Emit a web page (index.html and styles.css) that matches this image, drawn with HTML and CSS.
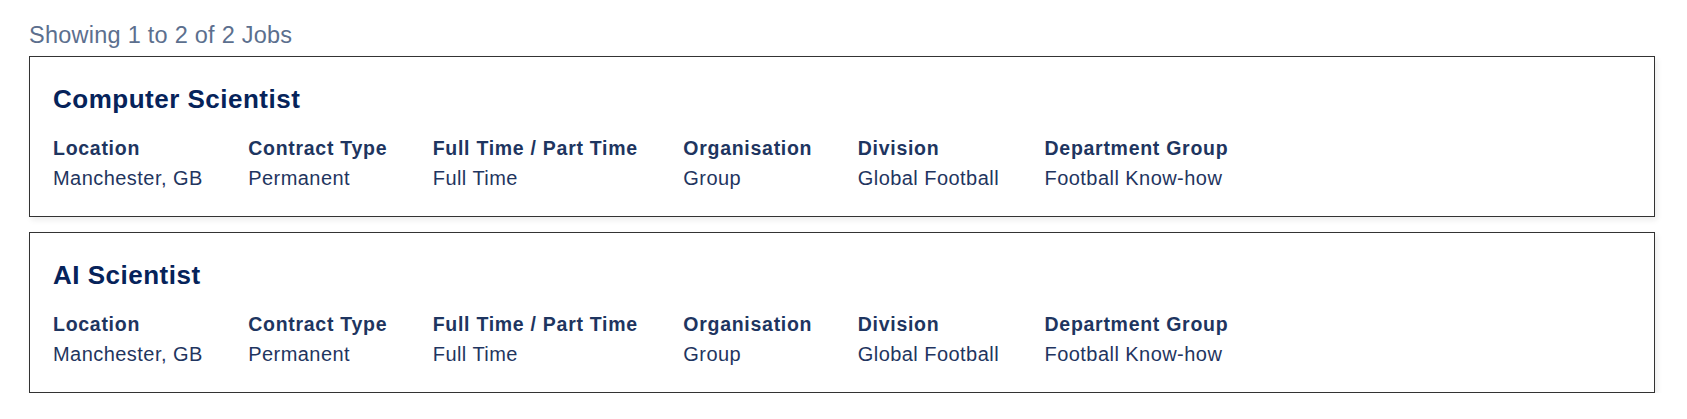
FILE: index.html
```html
<!DOCTYPE html>
<html lang="en">
<head>
<meta charset="utf-8">
<title>Jobs</title>
<link rel="stylesheet" href="styles.css">
</head>
<body>
<main class="results">
  <p class="results-count">Showing 1 to 2 of 2 Jobs</p>
  <ul class="job-list">
    <li class="job-card">
      <h2 class="job-title">Computer Scientist</h2>
      <dl class="job-meta">
        <div class="meta-item"><dt>Location</dt><dd>Manchester, GB</dd></div>
        <div class="meta-item"><dt>Contract Type</dt><dd>Permanent</dd></div>
        <div class="meta-item"><dt>Full Time / Part Time</dt><dd>Full Time</dd></div>
        <div class="meta-item"><dt>Organisation</dt><dd>Group</dd></div>
        <div class="meta-item"><dt>Division</dt><dd>Global Football</dd></div>
        <div class="meta-item"><dt>Department Group</dt><dd>Football Know-how</dd></div>
      </dl>
    </li>
    <li class="job-card">
      <h2 class="job-title">AI Scientist</h2>
      <dl class="job-meta">
        <div class="meta-item"><dt>Location</dt><dd>Manchester, GB</dd></div>
        <div class="meta-item"><dt>Contract Type</dt><dd>Permanent</dd></div>
        <div class="meta-item"><dt>Full Time / Part Time</dt><dd>Full Time</dd></div>
        <div class="meta-item"><dt>Organisation</dt><dd>Group</dd></div>
        <div class="meta-item"><dt>Division</dt><dd>Global Football</dd></div>
        <div class="meta-item"><dt>Department Group</dt><dd>Football Know-how</dd></div>
      </dl>
    </li>
  </ul>
</main>
</body>
</html>
```
FILE: styles.css
```css
html, body {
  margin: 0;
  padding: 0;
  background: #ffffff;
}

body {
  font-family: "Liberation Sans", Arial, sans-serif;
}

.results {
  padding: 22px 32px 0 29px;
}

.results-count {
  margin: 0 0 7px 0;
  font-size: 23.5px;
  line-height: 27px;
  letter-spacing: 0.25px;
  color: #5c6f8e;
}

.job-list {
  list-style: none;
  margin: 0;
  padding: 0;
  display: flex;
  flex-direction: column;
  gap: 15px;
}

.job-card {
  border: 1px solid #333333;
  padding: 28px 23px 24px 23px;
  box-shadow: 2px 3px 6px rgba(0, 0, 0, 0.08);
  background: #ffffff;
}

.job-title {
  margin: 0 0 22px 0;
  font-size: 26px;
  line-height: 28px;
  font-weight: bold;
  letter-spacing: 0.5px;
  color: #06235a;
}

.job-meta {
  margin: 0;
  display: flex;
  gap: 45.5px;
}

.meta-item dt {
  font-size: 19.5px;
  line-height: 27px;
  font-weight: bold;
  letter-spacing: 0.72px;
  color: #1e3560;
}

.meta-item dd {
  margin: 2px 0 0 0;
  font-size: 20px;
  line-height: 28px;
  letter-spacing: 0.45px;
  color: #1f3560;
}
```
